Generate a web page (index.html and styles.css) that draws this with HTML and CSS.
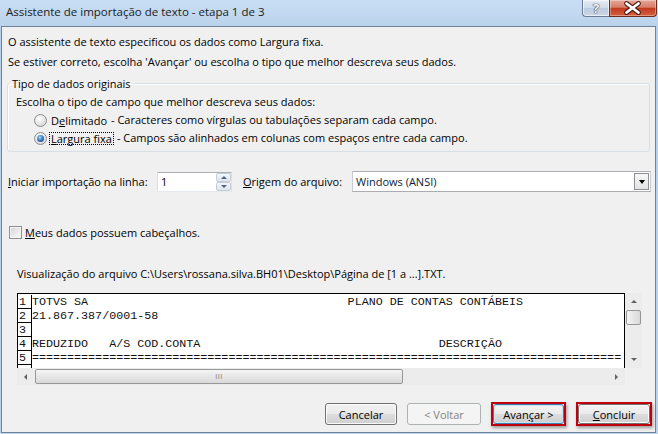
FILE: index.html
```html
<!DOCTYPE html>
<html lang="pt">

<head>
    <meta charset="UTF-8">
    <meta name="viewport" content="width=device-width, initial-scale=1.0">
    <title>Assistente de importação de texto</title>
    <link rel="stylesheet" href="styles.css">
</head>

<body>
    <div class="window">
        <div class="titlebar">
            <span class="title">Assistente de importação de texto - etapa 1 de 3</span>
            <div class="captionBtns">
                <div class="capHelp">?</div>
                <div class="capClose">
                    <svg width="45" height="16" viewBox="0 0 45 16">
                        <path d="M16.5 3.5 L28.5 12.5 M28.5 3.5 L16.5 12.5" stroke="#4a1a10" stroke-width="4.8" stroke-linecap="round" fill="none" />
                        <path d="M16.5 3.5 L28.5 12.5 M28.5 3.5 L16.5 12.5" stroke="#ffffff" stroke-width="2.8" stroke-linecap="round" fill="none" />
                    </svg>
                </div>
            </div>
        </div>

        <div class="panel">
            <p class="intro">O assistente de texto especificou os dados como Largura fixa.</p>
            <p class="intro">Se estiver correto, escolha 'Avançar' ou escolha o tipo que melhor descreva seus dados.</p>

            <fieldset class="group">
                <legend>Tipo de dados originais</legend>
                <div class="gRow">Escolha o tipo de campo que melhor descreva seus dados:</div>
                <div class="gRow opt">
                    <span class="radio"></span>
                    <span class="optLabel delim">D<u>e</u>limitado</span>
                    <span class="optDesc">- Caracteres como vírgulas ou tabulações separam cada campo.</span>
                </div>
                <div class="gRow opt">
                    <span class="radio checked"></span>
                    <span class="optLabel focused"><u>L</u>argura fixa</span>
                    <span class="optDesc">- Campos são alinhados em colunas com espaços entre cada campo.</span>
                </div>
            </fieldset>

            <div class="startRow">
                <span class="startLabel"><u>I</u>niciar importação na linha:</span>
                <div class="spin">
                    <span class="spinValue">1</span>
                    <div class="spinBtns">
                        <div class="spinUp"><i class="triUp"></i></div>
                        <div class="spinDown"><i class="triDown"></i></div>
                    </div>
                </div>
                <span class="originLabel"><u>O</u>rigem do arquivo:</span>
                <div class="select">
                    <span class="selectValue">Windows (ANSI)</span>
                    <div class="selectBtn"><i class="triDownBlack"></i></div>
                </div>
            </div>

            <div class="checkRow">
                <span class="checkbox"></span>
                <span><u>M</u>eus dados possuem cabeçalhos.</span>
            </div>

            <div class="previewCaption">Visualização do arquivo C:\Users\rossana.silva.BH01\Desktop\Página de [1 a ...].TXT.</div>

            <div class="preview">
                <div class="previewText">
                    <div class="line"><span class="num">1</span><span class="txt">TOTVS SA                                     PLANO DE CONTAS CONTÁBEIS</span></div>
                    <div class="line"><span class="num">2</span><span class="txt">21.867.387/0001-58</span></div>
                    <div class="line"><span class="num">3</span><span class="txt"></span></div>
                    <div class="line"><span class="num">4</span><span class="txt">REDUZIDO   A/S COD.CONTA                                  DESCRIÇÃO</span></div>
                    <div class="line"><span class="num">5</span><span class="txt">====================================================================================</span></div>
                    <div class="line"><span class="num"></span><span class="txt"></span></div>
                </div>
                <div class="vscroll">
                    <div class="sbBtn"><i class="sbUp"></i></div>
                    <div class="vtrack">
                        <div class="vthumb"></div>
                    </div>
                    <div class="sbBtn"><i class="sbDown"></i></div>
                </div>
                <div class="hscroll">
                    <div class="sbBtn"><i class="sbLeft"></i></div>
                    <div class="htrack">
                        <div class="hthumb"><span class="grip">III</span></div>
                    </div>
                    <div class="sbBtn"><i class="sbRight"></i></div>
                </div>
                <div class="corner"></div>
            </div>

            <div class="footer">
                <button class="btn btnCancel">Cancelar</button>
                <button class="btn btnBack" disabled>&lt; Voltar</button>
                <div class="mark markNext"><button class="btn btnDefault">Avan<u>ç</u>ar &gt;</button></div>
                <div class="mark markDone"><button class="btn"><u>C</u>oncluir</button></div>
            </div>
        </div>
    </div>
</body>

</html>
```

FILE: styles.css
```css
body {
    margin: 0;
    font-family: "Open Sans", "Noto Sans", sans-serif;
    font-size: 11px;
    color: #000;
}

.window {
    width: 658px;
    height: 434px;
    box-sizing: border-box;
    padding: 0 2px 1px 1px;
    background: linear-gradient(to bottom, #c9def4, #b8d0ea 30px, #bcd3ec);
    display: flex;
    flex-direction: column;
}

.titlebar {
    height: 26px;
    display: flex;
    justify-content: space-between;
    align-items: flex-start;
    flex-shrink: 0;
}

.title {
    padding: 4px 0 0 5px;
    line-height: 16px;
    font-size: 11.5px;
    color: #1b1b1b;
}

.captionBtns {
    display: flex;
    margin-right: -1px;
}

.capHelp {
    width: 26px;
    height: 16px;
    border: 1px solid #6c7c93;
    border-top: none;
    border-right: none;
    border-radius: 0 0 0 4px;
    background: linear-gradient(to bottom, #e3ebf5, #cfdbe9 50%, #bccbde 51%, #c9d7e7);
    box-shadow: inset 0 0 0 1px rgba(255, 255, 255, 0.6);
    text-align: center;
    font-weight: bold;
    font-size: 13px;
    line-height: 16px;
    color: #f4f6f9;
    text-shadow: 0 0 1px #3d4a5c, 0 0 1px #3d4a5c, 0 0 1px #3d4a5c;
}

.capClose {
    width: 46px;
    height: 16px;
    border: 1px solid #6e2c20;
    border-top: none;
    border-radius: 0 0 4px 0;
    background: linear-gradient(to bottom, #e6a797, #d67e6a 45%, #c23a1f 52%, #d5603f);
    box-shadow: inset 0 0 0 1px rgba(255, 255, 255, 0.35);
}

.capClose svg {
    display: block;
}

.panel {
    flex: 1;
    background: #f0f0f0;
    border: 1px solid #6f829c;
    padding: 5px 0 6px 0;
    display: flex;
    flex-direction: column;
}

.intro {
    margin: 0;
    padding-left: 6px;
    line-height: 20px;
}

.group {
    margin: 4px 5px 0 5px;
    padding: 2px 4px 4px 2px;
    min-width: 0;
    border: 1px solid #d5dfe5;
    border-radius: 3px;
    box-shadow: inset 1px 1px 0 #fff;
}

.group legend {
    padding: 0 2px;
    line-height: 15px;
}

.gRow {
    height: 18px;
    line-height: 18px;
    padding-left: 6px;
    display: flex;
    align-items: center;
}

.opt {
    padding-left: 24px;
}

.radio {
    width: 11px;
    height: 11px;
    border: 1px solid #8b8d8f;
    border-radius: 50%;
    background: radial-gradient(circle at 40% 35%, #ffffff, #e4e4e4 55%, #cfcfcf);
    position: relative;
    flex-shrink: 0;
}

.radio.checked::after {
    content: "";
    position: absolute;
    left: 2px;
    top: 2px;
    width: 7px;
    height: 7px;
    border-radius: 50%;
    background: radial-gradient(circle at 40% 35%, #a9d6f7, #2f6fb5 55%, #173e72);
}

.optLabel {
    margin-left: 4px;
    line-height: 11px;
}

.delim {
    width: 57px;
    flex-shrink: 0;
    white-space: nowrap;
}

.focused {
    margin-left: 2px;
    padding: 0 1px;
    border: 1px dotted #000;
}

.optDesc {
    margin-left: 3px;
}

.startRow {
    margin-top: 19px;
    height: 21px;
    display: flex;
    align-items: center;
    padding-left: 6px;
}

.startLabel {
    width: 149px;
}

.spin {
    width: 75px;
    height: 20px;
    box-sizing: border-box;
    border: 1px solid #abadb3;
    border-left-color: #dbdfe6;
    border-right-color: #dbdfe6;
    border-bottom-color: #e3e9ef;
    background: #fff;
    display: flex;
    align-items: center;
    justify-content: space-between;
}

.spinValue {
    padding-left: 3px;
}

.spinBtns {
    width: 15px;
    height: 18px;
    display: flex;
    flex-direction: column;
}

.spinUp,
.spinDown {
    flex: 1;
    box-sizing: border-box;
    border: 1px solid #c5cdd8;
    border-radius: 2px;
    background: linear-gradient(to bottom, #f3f6fa, #dde5ee);
    display: flex;
    align-items: center;
    justify-content: center;
}

.triUp {
    border-left: 3px solid transparent;
    border-right: 3px solid transparent;
    border-bottom: 3px solid #4d6185;
}

.triDown {
    border-left: 3px solid transparent;
    border-right: 3px solid transparent;
    border-top: 3px solid #4d6185;
}

.originLabel {
    margin-left: 11px;
    width: 109px;
}

.select {
    flex: 1;
    margin-right: 4px;
    height: 21px;
    box-sizing: border-box;
    border: 1px solid #abadb3;
    border-left-color: #c9ccd3;
    border-right-color: #c9ccd3;
    background: #fff;
    display: flex;
    align-items: center;
    justify-content: space-between;
}

.selectValue {
    padding-left: 3px;
    color: #0e1d36;
}

.selectBtn {
    width: 15px;
    height: 17px;
    margin-right: 1px;
    box-sizing: border-box;
    border: 1px solid #8e8f8f;
    background: linear-gradient(to bottom, #f7f7f7, #e3e3e3);
    display: flex;
    align-items: center;
    justify-content: center;
}

.triDownBlack {
    border-left: 3px solid transparent;
    border-right: 3px solid transparent;
    border-top: 4px solid #000;
}

.checkRow {
    margin-top: 32px;
    height: 17px;
    display: flex;
    align-items: center;
    padding-left: 7px;
}

.checkbox {
    width: 11px;
    height: 11px;
    border: 1px solid #8e8f8f;
    background: linear-gradient(135deg, #d2d2d2, #ececec 60%, #f8f8f8);
    box-shadow: inset 0 0 0 1px #f4f4f4;
    margin-right: 3px;
}

.previewCaption {
    margin-top: 25px;
    padding-left: 15px;
    line-height: 16px;
}

.preview {
    margin: 11px 0 0 15px;
    display: grid;
    grid-template-columns: 608px 17px;
    grid-template-rows: 75px 17px;
    width: 625px;
}

.previewText {
    border: 1px solid #000;
    border-bottom: none;
    background: #fff;
    overflow: hidden;
    padding-top: 1px;
    font-family: "Liberation Mono", "Courier New", monospace;
    font-size: 11.7px;
    color: #111;
}

.line {
    height: 14px;
    display: flex;
    line-height: 15px;
}

.num {
    width: 12px;
    flex-shrink: 0;
    padding-left: 1px;
    box-sizing: content-box;
    border-right: 1px solid #000;
    border-bottom: 1px solid #000;
    height: 13px;
    line-height: 15px;
}

.txt {
    white-space: pre;
}

.vscroll {
    background: #ececec;
    display: flex;
    flex-direction: column;
}

.hscroll {
    background: #ececec;
    display: flex;
}

.corner {
    background: #f0f0f0;
}

.sbBtn {
    width: 17px;
    height: 17px;
    flex-shrink: 0;
    display: flex;
    align-items: center;
    justify-content: center;
}

.sbUp {
    border-left: 3px solid transparent;
    border-right: 3px solid transparent;
    border-bottom: 3px solid #606060;
}

.sbDown {
    border-left: 3px solid transparent;
    border-right: 3px solid transparent;
    border-top: 3px solid #606060;
}

.sbLeft {
    border-top: 3px solid transparent;
    border-bottom: 3px solid transparent;
    border-right: 3px solid #606060;
}

.sbRight {
    border-top: 3px solid transparent;
    border-bottom: 3px solid transparent;
    border-left: 3px solid #606060;
}

.vtrack {
    flex: 1;
    padding: 0 1px;
}

.vthumb {
    height: 15px;
    box-sizing: border-box;
    border: 1px solid #979797;
    border-radius: 2px;
    background: linear-gradient(to right, #f5f5f5, #e6e6e6 50%, #d9d9d9);
}

.htrack {
    flex: 1;
    padding: 1px 0 1px 1px;
}

.hthumb {
    width: 368px;
    height: 15px;
    box-sizing: border-box;
    border: 1px solid #979797;
    border-radius: 2px;
    background: linear-gradient(to bottom, #f5f5f5, #e6e6e6 50%, #d9d9d9);
    display: flex;
    align-items: center;
    justify-content: center;
}

.grip {
    font-size: 7px;
    line-height: 7px;
    letter-spacing: 0.5px;
    color: #707070;
}

.footer {
    margin-top: 17px;
    height: 24px;
    display: flex;
    align-items: center;
    justify-content: flex-end;
    gap: 10px;
    padding-right: 3px;
}

.btn {
    height: 22px;
    box-sizing: border-box;
    border: 1px solid #707070;
    border-radius: 3px;
    background: linear-gradient(to bottom, #f2f2f2, #ebebeb 48%, #dddddd 52%, #cfcfcf);
    box-shadow: inset 0 0 0 1px #fbfbfb;
    font-family: "Open Sans", "Noto Sans", sans-serif;
    font-size: 11px;
    color: #000;
    padding: 0;
}

.btnCancel {
    width: 72px;
}

.btnBack {
    width: 74px;
    border-color: #adb2b5;
    background: #f4f4f4;
    box-shadow: none;
    color: #838383;
}

.mark {
    height: 24px;
    box-sizing: border-box;
    border: 2px solid #c0000c;
    box-shadow: 1px 2px 3px rgba(0, 0, 0, 0.35);
    display: flex;
}

.markNext {
    width: 75px;
}

.markDone {
    width: 76px;
}

.mark .btn {
    flex: 1;
    height: 20px;
}

.btnDefault {
    border-color: #3c7fb1;
    box-shadow: inset 0 0 0 1px #c2e4f6;
}
```
